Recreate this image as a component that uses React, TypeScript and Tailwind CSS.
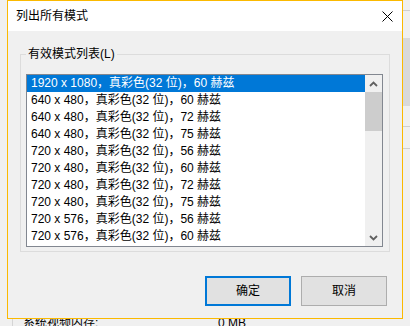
const modes = [
    "1920 x 1080，真彩色(32 位)，60 赫兹",
    "640 x 480，真彩色(32 位)，60 赫兹",
    "640 x 480，真彩色(32 位)，72 赫兹",
    "640 x 480，真彩色(32 位)，75 赫兹",
    "720 x 480，真彩色(32 位)，56 赫兹",
    "720 x 480，真彩色(32 位)，60 赫兹",
    "720 x 480，真彩色(32 位)，72 赫兹",
    "720 x 480，真彩色(32 位)，75 赫兹",
    "720 x 576，真彩色(32 位)，56 赫兹",
    "720 x 576，真彩色(32 位)，60 赫兹",
]

function Chevron({up}: {up?: boolean}) {
    return (
        <svg width="9" height="6" viewBox="0 0 9 6">
            <path d={up ? "M1 5 L4.5 1.5 L8 5" : "M1 1 L4.5 4.5 L8 1"} fill="none" stroke="#606060" strokeWidth="1.8"/>
        </svg>
    )
}

export default function App() {
    return (
        <div
            className="relative h-[326px] w-[410px] overflow-hidden bg-[#f0f0f0] text-[12px] text-black"
            style={{fontFamily: '"Liberation Sans", "Noto Sans CJK SC", sans-serif'}}
        >
            {/* window behind the dialog */}
            <div className="absolute left-[12px] top-[300px] h-[40px] w-px bg-[#d5d5d5]"/>
            <div className="absolute left-[23px] top-[315px] leading-[16px]">系统视频内存:</div>
            <div className="absolute left-[218px] top-[315px] leading-[16px]">0 MB</div>
            <div className="absolute left-[403px] top-[10px] h-px w-[7px] bg-[#cfcfcf]"/>
            <div className="absolute left-[403px] top-[38px] h-[68px] w-[7px] bg-[#d9d9d9]"/>
            <div className="absolute left-[403px] top-[126px] h-px w-[7px] bg-[#cfcfcf]"/>
            <div className="absolute left-[403px] top-[148px] h-px w-[7px] bg-[#cfcfcf]"/>

            {/* dialog */}
            <div className="absolute left-[7px] top-0 flex h-[319px] w-[396px] flex-col border border-[#fbb900] bg-[#f0f0f0]">
                <div className="flex h-[30px] shrink-0 items-center justify-between bg-white pl-[8px] pr-[9px]">
                    <span className="leading-[16px]">列出所有模式</span>
                    <svg width="11" height="11" viewBox="0 0 11 11">
                        <path d="M0.5 0.5 L10.5 10.5 M10.5 0.5 L0.5 10.5" stroke="#000" strokeWidth="1"/>
                    </svg>
                </div>

                <div className="flex flex-1 flex-col px-[12px]">
                    <fieldset className="mt-[15px] border border-[#dcdcdc] pb-[4px] pl-[5px] pr-[6px] pt-[12px]">
                        <legend className="px-[2px] leading-[16px]">有效模式列表(L)</legend>
                        <div className="flex h-[173px] w-[357px] border border-[#828790] bg-white">
                            <div className="flex flex-1 flex-col">
                                {modes.map((m, i) => (
                                    <div
                                        key={m}
                                        className={`h-[17px] shrink-0 whitespace-nowrap pl-[4px] leading-[17px] ${i === 0 ? "bg-[#0078d7] text-white" : ""}`}
                                    >
                                        {m}
                                    </div>
                                ))}
                            </div>
                            <div className="flex w-[17px] flex-col bg-[#f0f0f0]">
                                <div className="flex h-[17px] items-center justify-center"><Chevron up/></div>
                                <div className="h-[39px] bg-[#cdcdcd]"/>
                                <div className="flex-1"/>
                                <div className="flex h-[17px] items-center justify-center"><Chevron/></div>
                            </div>
                        </div>
                    </fieldset>

                    <div className="mr-[3px] mt-[24px] flex justify-end gap-[10px]">
                        <button className="flex h-[30px] w-[86px] items-center justify-center border-2 border-[#0078d7] bg-[#e1e1e1]">确定</button>
                        <button className="flex h-[30px] w-[86px] items-center justify-center border border-[#adadad] bg-[#e1e1e1]">取消</button>
                    </div>
                </div>
            </div>
        </div>
    )
}
